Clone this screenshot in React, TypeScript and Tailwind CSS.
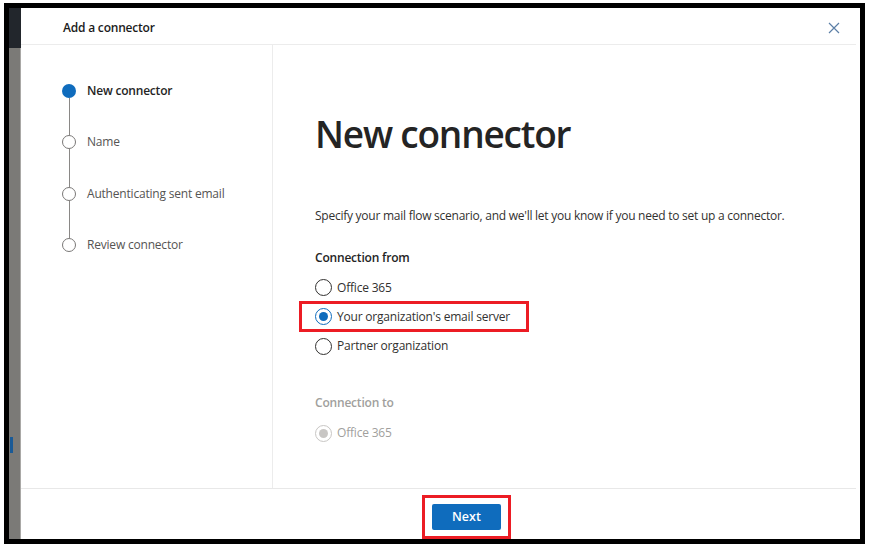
import React from "react";

const font = { fontFamily: '"Open Sans", "Noto Sans", "Liberation Sans", sans-serif' };

function StepDot({ active }: { active?: boolean }) {
  return active ? (
    <div className="w-[14px] h-[14px] rounded-full bg-[#0f6cbd] shrink-0" />
  ) : (
    <div className="w-[14px] h-[14px] flex items-center justify-center shrink-0">
      <div className="w-[14px] h-[14px] rounded-full border-[1.5px] border-[#7a7877] bg-white" />
    </div>
  );
}

function Step({ label, active }: { label: string; active?: boolean }) {
  return (
    <div className="flex items-center h-[14px]">
      <StepDot active={active} />
      <span
        className={`ml-[11px] text-[12px] tracking-[-0.2px] leading-[14px] whitespace-nowrap ${
          active ? "font-semibold text-[#242424]" : "text-[#555453]"
        }`}
      >
        {label}
      </span>
    </div>
  );
}

function Line({ h }: { h: string }) {
  return (
    <div className={`flex justify-center w-[14px] ${h}`}>
      <div className="w-px h-full bg-[#8a8886]" />
    </div>
  );
}

function Radio({
  label,
  checked,
  disabled,
}: {
  label: string;
  checked?: boolean;
  disabled?: boolean;
}) {
  const ring = disabled
    ? "border-[#c8c6c4]"
    : checked
    ? "border-[#0f6cbd]"
    : "border-[#323130]";
  return (
    <div className="flex items-center">
      <div
        className={`w-[17px] h-[17px] rounded-full border ${ring} flex items-center justify-center shrink-0`}
      >
        {checked && (
          <div
            className={`w-[9px] h-[9px] rounded-full ${
              disabled ? "bg-[#c8c6c4]" : "bg-[#0f6cbd]"
            }`}
          />
        )}
      </div>
      <span
        className={`ml-[5px] text-[12px] tracking-[-0.2px] leading-[18px] whitespace-nowrap ${
          disabled ? "text-[#a19f9d]" : "text-[#323130]"
        }`}
      >
        {label}
      </span>
    </div>
  );
}

export default function App() {
  return (
    <div className="w-[872px] h-[551px] bg-white pt-[3px] pl-[4px]" style={font}>
      <div className="w-[861px] h-[541px] border-[5px] border-black flex">
        {/* left background strip */}
        <div className="w-[12px] flex flex-col shrink-0">
          <div className="h-[40px] bg-[#22262c]" />
          <div className="flex-1 bg-[#7b7a77] border-r border-[#a9a8a6] flex flex-col">
            <div className="h-[389px]" />
            <div className="ml-[1px] w-[3px] h-[16px] bg-[#1a5a96]" />
          </div>
        </div>

        {/* dialog */}
        <div className="flex-1 flex flex-col bg-white">
          {/* header */}
          <div className="h-[37px] flex items-center pt-[3px] pl-[42px] pr-[16px] mr-[4px] border-b border-[#ececec]">
            <span className="text-[12px] tracking-[-0.2px] font-semibold text-[#1b1b1b] leading-none">
              Add a connector
            </span>
            <div className="flex-1" />
            <svg width="12" height="12" viewBox="0 0 12 12">
              <path d="M1 1 L11 11 M11 1 L1 11" stroke="#5c7fa6" strokeWidth="1.2" fill="none" />
            </svg>
          </div>

          {/* body */}
          <div className="flex-1 flex mr-[4px] border-b border-[#e8e8e8]">
            {/* nav */}
            <div className="w-[252px] border-r border-[#ececec] pl-[41px] pt-[39px] flex flex-col">
              <Step label="New connector" active />
              <Line h="h-[37px]" />
              <Step label="Name" />
              <Line h="h-[38px]" />
              <Step label="Authenticating sent email" />
              <Line h="h-[37px]" />
              <Step label="Review connector" />
            </div>

            {/* main */}
            <div className="flex-1 pl-[42px] pt-[69px] flex flex-col">
              <h1 className="text-[37px] leading-[40px] font-semibold text-[#242424] tracking-[-1.2px]">
                New connector
              </h1>
              <p className="mt-[53px] text-[12px] tracking-[-0.25px] leading-[18px] text-[#323130]">
                Specify your mail flow scenario, and we'll let you know if you need to set up a connector.
              </p>
              <div className="mt-[24px] text-[12px] tracking-[-0.2px] leading-[18px] font-semibold text-[#242424]">
                Connection from
              </div>
              <div className="mt-[7px] h-[27px] flex items-center">
                <Radio label="Office 365" />
              </div>
              <div className="-ml-[16px] w-[230px] h-[31px] border-[3px] border-[#ec1c24] pl-[13px] flex items-center">
                <Radio label="Your organization's email server" checked />
              </div>
              <div className="h-[28px] flex items-center">
                <Radio label="Partner organization" />
              </div>
              <div className="mt-[34px] text-[12px] tracking-[-0.2px] leading-[18px] font-semibold text-[#a19f9d]">
                Connection to
              </div>
              <div className="mt-[7px] h-[28px] flex items-center">
                <Radio label="Office 365" checked disabled />
              </div>
            </div>
          </div>

          {/* footer */}
          <div className="h-[50px] flex items-end pl-[401px]">
            <div className="border-[3px] border-[#ec1c24] px-[7px] pt-[5px] pb-[6px]">
              <button className="w-[69px] h-[26px] rounded-[2px] bg-[#0f6cbd] text-white text-[12.5px] font-semibold leading-none">
                Next
              </button>
            </div>
          </div>
        </div>
      </div>
    </div>
  );
}
